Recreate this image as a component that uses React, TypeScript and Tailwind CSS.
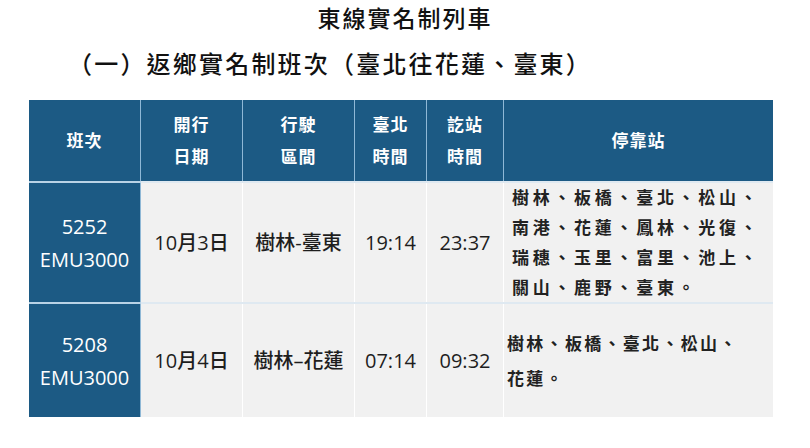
import React from "react";

const font = { fontFamily: '"Open Sans", "Noto Sans CJK TC", sans-serif' };
const cols = "grid grid-cols-[112px_102px_112px_72px_77px_269px]";

function H({ children, last }: { children: React.ReactNode; last?: boolean }) {
  return (
    <div
      className={`flex flex-col items-center justify-center bg-[#1c5a84] text-white font-bold text-[17px] leading-[32px] tracking-[1px] ${last ? "" : "border-r border-[#8fb8d6]"}`}
    >
      {children}
    </div>
  );
}

function C({ children }: { children: React.ReactNode }) {
  return (
    <div className="flex items-center justify-center text-[20px] font-medium text-[#1e1e1e] border-r border-[#ffffff] bg-[#f1f1f1]">
      {children}
    </div>
  );
}

function Sep() {
  return (
    <div className={`${cols} h-[2px]`}>
      <div className="bg-[#b9d3e6]" />
      <div className="col-span-5 bg-[#dfe9f1]" />
    </div>
  );
}

function Row({
  no,
  date,
  route,
  dep,
  arr,
  stops,
  h,
  lh,
  track,
  pl,
}: {
  no: string;
  date: string;
  route: string;
  dep: string;
  arr: string;
  stops: string[];
  h: string;
  lh: string;
  track: string;
  pl: string;
}) {
  return (
    <div className={`${cols} ${h}`}>
      <div className="flex flex-col items-center justify-center bg-[#1c5a84] text-white text-[20px] leading-[33px] border-r border-[#8fb8d6]">
        <span>{no}</span>
        <span>EMU3000</span>
      </div>
      <C>{date}</C>
      <C>{route}</C>
      <C>{dep}</C>
      <C>{arr}</C>
      <div className={`flex flex-col justify-center bg-[#f1f1f1] ${pl} text-[17px] font-bold text-[#222] ${lh} ${track}`}>
        {stops.map((s, i) => (
          <span key={i} className="whitespace-nowrap">{s}</span>
        ))}
      </div>
    </div>
  );
}

export default function App() {
  return (
    <div className="w-[810px] h-[448px] bg-white overflow-hidden" style={font}>
      <div className="h-[36px] flex items-center justify-center text-[23px] font-medium text-[#111] tracking-[2px]">
        東線實名制列車
      </div>
      <div className="h-[56px] flex items-center pl-[68px] text-[24px] font-medium text-[#111] tracking-[2.2px]">
        （一）返鄉實名制班次（臺北往花蓮、臺東）
      </div>
      <div className="ml-[29px] mt-[8px] w-[744px]">
        <div className={`${cols} h-[81px]`}>
          <H>班次</H>
          <H>
            <span>開行</span>
            <span>日期</span>
          </H>
          <H>
            <span>行駛</span>
            <span>區間</span>
          </H>
          <H>
            <span>臺北</span>
            <span>時間</span>
          </H>
          <H>
            <span>訖站</span>
            <span>時間</span>
          </H>
          <H last>停靠站</H>
        </div>
        <Sep />
        <Row
          no="5252"
          date="10月3日"
          route="樹林-臺東"
          dep="19:14"
          arr="23:37"
          stops={["樹林、板橋、臺北、松山、", "南港、花蓮、鳳林、光復、", "瑞穗、玉里、富里、池上、", "關山、鹿野、臺東。"]}
          h="h-[119px]"
          lh="leading-[30px]"
          track="tracking-[3.7px]"
          pl="pl-[8px]"
        />
        <Sep />
        <Row
          no="5208"
          date="10月4日"
          route="樹林–花蓮"
          dep="07:14"
          arr="09:32"
          stops={["樹林、板橋、臺北、松山、", "花蓮。"]}
          h="h-[113px]"
          lh="leading-[35px]"
          track="tracking-[2.3px]"
          pl="pl-[3px]"
        />
      </div>
    </div>
  );
}
